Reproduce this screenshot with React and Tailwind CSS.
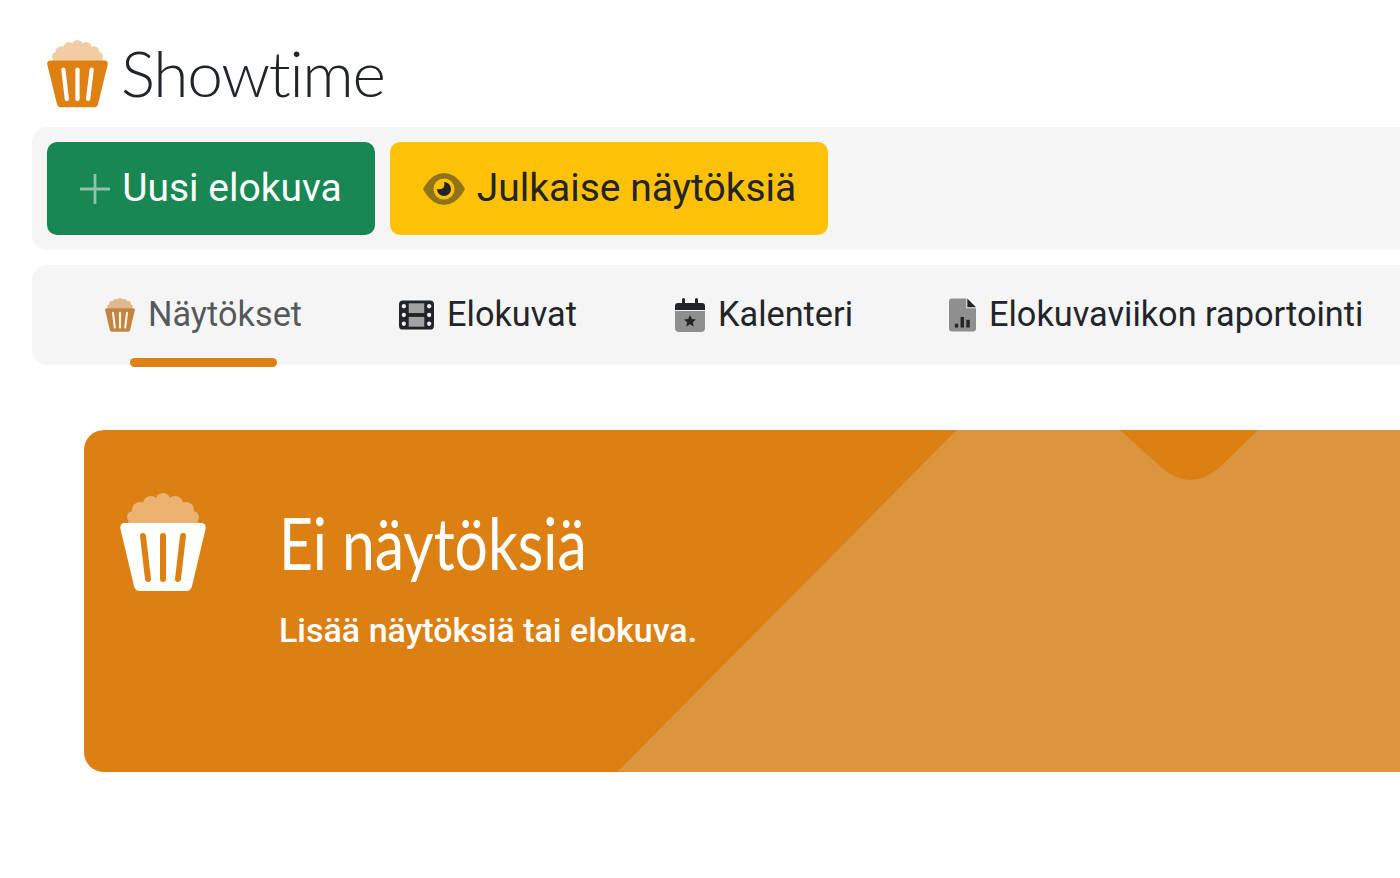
const Popcorn = ({ className, bucket, top, slit }) => (
  <svg viewBox="0 0 86 99" preserveAspectRatio="none" className={className}>
    <g fill={top}>
      <circle cx="43" cy="7.500" r="7.500" />
      <circle cx="31" cy="11" r="8" />
      <circle cx="55" cy="11" r="8" />
      <circle cx="20" cy="17" r="8" />
      <circle cx="66" cy="17" r="8" />
      <circle cx="13" cy="24" r="6" />
      <circle cx="73" cy="24" r="6" />
      <path d="M6 32 L20 12 H66 L80 32 Z" />
    </g>
    <path
      fill={bucket}
      d="M5 30 H81 Q86.500 30 85.500 36 L72 93 Q71 98 66 98 H20 Q15 98 14 93 L0.500 36 Q-0.500 30 5 30 Z"
    />
    <g stroke={slit} strokeWidth="6" strokeLinecap="round">
      <path d="M23 43 L28 86" />
      <path d="M43 43 V86" />
      <path d="M63 43 L58 86" />
    </g>
  </svg>
);

const EyeIcon = () => (
  <svg viewBox="0 0 44 36" className="w-[44px] h-[36px]">
    <path fill="#212529" fillOpacity="0.5" d="M1 18 Q5 10 12 5 Q22 -1 32 5 Q39 10 43 18 Q39 26 32 31 Q22 37 12 31 Q5 26 1 18 Z" />
    <circle cx="22" cy="18" r="10.500" fill="#ffc107" />
    <path fill="#212529" d="M22 11 A7 7 0 1 1 15 18 Q20 19 22 16 Q23 13 22 11 Z" />
  </svg>
);

const FilmIcon = () => (
  <svg viewBox="0 0 36 32" className="w-[35px] h-[32px] -ml-[1px]">
    <rect x="0" y="1" width="36" height="30" rx="4" fill="#212529" />
    <rect x="10" y="4" width="16" height="10" fill="#a3a3a3" />
    <rect x="10" y="18" width="16" height="10" fill="#a3a3a3" />
    <g fill="#f0f0f0">
      <circle cx="5" cy="7" r="2.200" />
      <circle cx="5" cy="16" r="2.200" />
      <circle cx="5" cy="25" r="2.200" />
      <circle cx="31" cy="7" r="2.200" />
      <circle cx="31" cy="16" r="2.200" />
      <circle cx="31" cy="25" r="2.200" />
    </g>
  </svg>
);

const CalendarIcon = () => (
  <svg viewBox="0 0 30 34" className="w-[30px] h-[34px]">
    <path fill="#8f8f8f" d="M0 13 H30 V30 Q30 34 26 34 H4 Q0 34 0 30 Z" />
    <path fill="#212529" d="M0 12 V8 Q0 5 3 5 H7 V1.500 Q7 0 8.500 0 Q10 0 10 1.500 V5 H20 V1.500 Q20 0 21.500 0 Q23 0 23 1.500 V5 H27 Q30 5 30 8 V12 Z" />
    <path fill="#212529" d="M15 17 L16.800 21 L21 21.400 L17.800 24.200 L18.800 28.500 L15 26.200 L11.200 28.500 L12.200 24.200 L9 21.400 L13.200 21 Z" />
  </svg>
);

const ReportIcon = () => (
  <svg viewBox="0 0 28 34" className="w-[27px] h-[34px] -ml-[2px]">
    <path fill="#8f8f8f" d="M3 0 H18 V10 H28 V31 Q28 34 25 34 H3 Q0 34 0 31 V3 Q0 0 3 0 Z" />
    <path fill="#212529" d="M19 0 L28 9 H19 Z" />
    <rect x="6" y="26" width="3.500" height="4" fill="#212529" />
    <rect x="12" y="19" width="3.500" height="11" fill="#212529" />
    <rect x="18" y="22" width="3.500" height="8" fill="#212529" />
  </svg>
);

const navItems = [
  { label: 'Elokuvat', icon: <FilmIcon />, gap: 'gap-[13px]' },
  { label: 'Kalenteri', icon: <CalendarIcon />, gap: 'gap-[13px]' },
  { label: 'Elokuvaviikon raportointi', icon: <ReportIcon />, gap: 'gap-[13px]' },
];

export default function App() {
  return (
    <div className="w-[1400px] h-[878px] overflow-hidden bg-white font-['Roboto',sans-serif]">
      <div className="w-[1500px] pl-[32px]">
        {/* title */}
        <div className="flex items-center h-[127px] pl-[15px] pt-[21px] gap-[13px]">
          <Popcorn className="w-[61px] h-[68px]" bucket="#df8012" top="#f2cda3" slit="#ffffff" />
          <h1 className="font-['Lato',sans-serif] font-light text-[#212529] text-[64px] tracking-[-1.300px] leading-none -mt-[3px]">Showtime</h1>
        </div>

        {/* actions */}
        <div className="flex gap-[15px] p-[15px] bg-[#f5f5f5] rounded-[15px]">
          <button className="flex items-center justify-center gap-[12px] w-[328px] h-[93px] rounded-[10px] bg-[#198754] text-white text-[39px]">
            <svg viewBox="0 0 32 32" className="w-[30px] h-[30px]">
              <path d="M16 0 V32 M0 16 H32" stroke="#ffffff" strokeOpacity="0.5" strokeWidth="3" />
            </svg>
            Uusi elokuva
          </button>
          <button className="flex items-center justify-center gap-[11px] w-[438px] h-[93px] rounded-[10px] bg-[#ffc107] text-[#212529] text-[39px]">
            <EyeIcon />
            Julkaise näytöksiä
          </button>
        </div>

        {/* tabs */}
        <nav className="flex items-center gap-[98px] h-[100px] mt-[15px] pl-[73px] bg-[#f5f5f5] rounded-[15px] text-[34.300px] text-[#212529]">
          <div className="relative flex items-center gap-[13px] text-[#212529]/75">
            <Popcorn className="w-[30px] h-[34px] opacity-80" bucket="#b9690f" top="#dba875" slit="#f5f5f5" />
            Näytökset
            <span className="absolute left-[25px] top-[69px] w-[147px] h-[9px] rounded-full bg-[#df8012]" />
          </div>
          {navItems.map((item) => (
            <div key={item.label} className={`flex items-center ${item.gap}`}>
              {item.icon}
              {item.label}
            </div>
          ))}
        </nav>

        {/* empty state card */}
        <div className="relative ml-[52px] mt-[65px] h-[342px] rounded-[20px] overflow-hidden bg-[#dc8014] text-white">
          <svg viewBox="0 0 1416 342" className="absolute inset-0 w-[1416px] h-[342px]">
            <path
              fill="#dc953f"
              d="M873 0 L533 342 H1416 V0 H1174 L1135 38 Q1106 62 1078 38 L1036 0 Z"
            />
          </svg>
          <div className="relative flex pl-[36px] pt-[63px]">
            <Popcorn className="w-[86px] h-[99px]" bucket="#ffffff" top="#edb271" slit="#dc8014" />
            <div className="ml-[73px] mt-[7px]">
              <h2 className="font-['Lato',sans-serif] font-normal text-[72px] leading-[84px] scale-x-[0.817] origin-left">Ei näytöksiä</h2>
              <p className="mt-[24px] text-[34px] font-medium leading-[44px]">Lisää näytöksiä tai elokuva.</p>
            </div>
          </div>
        </div>
      </div>
    </div>
  );
}
